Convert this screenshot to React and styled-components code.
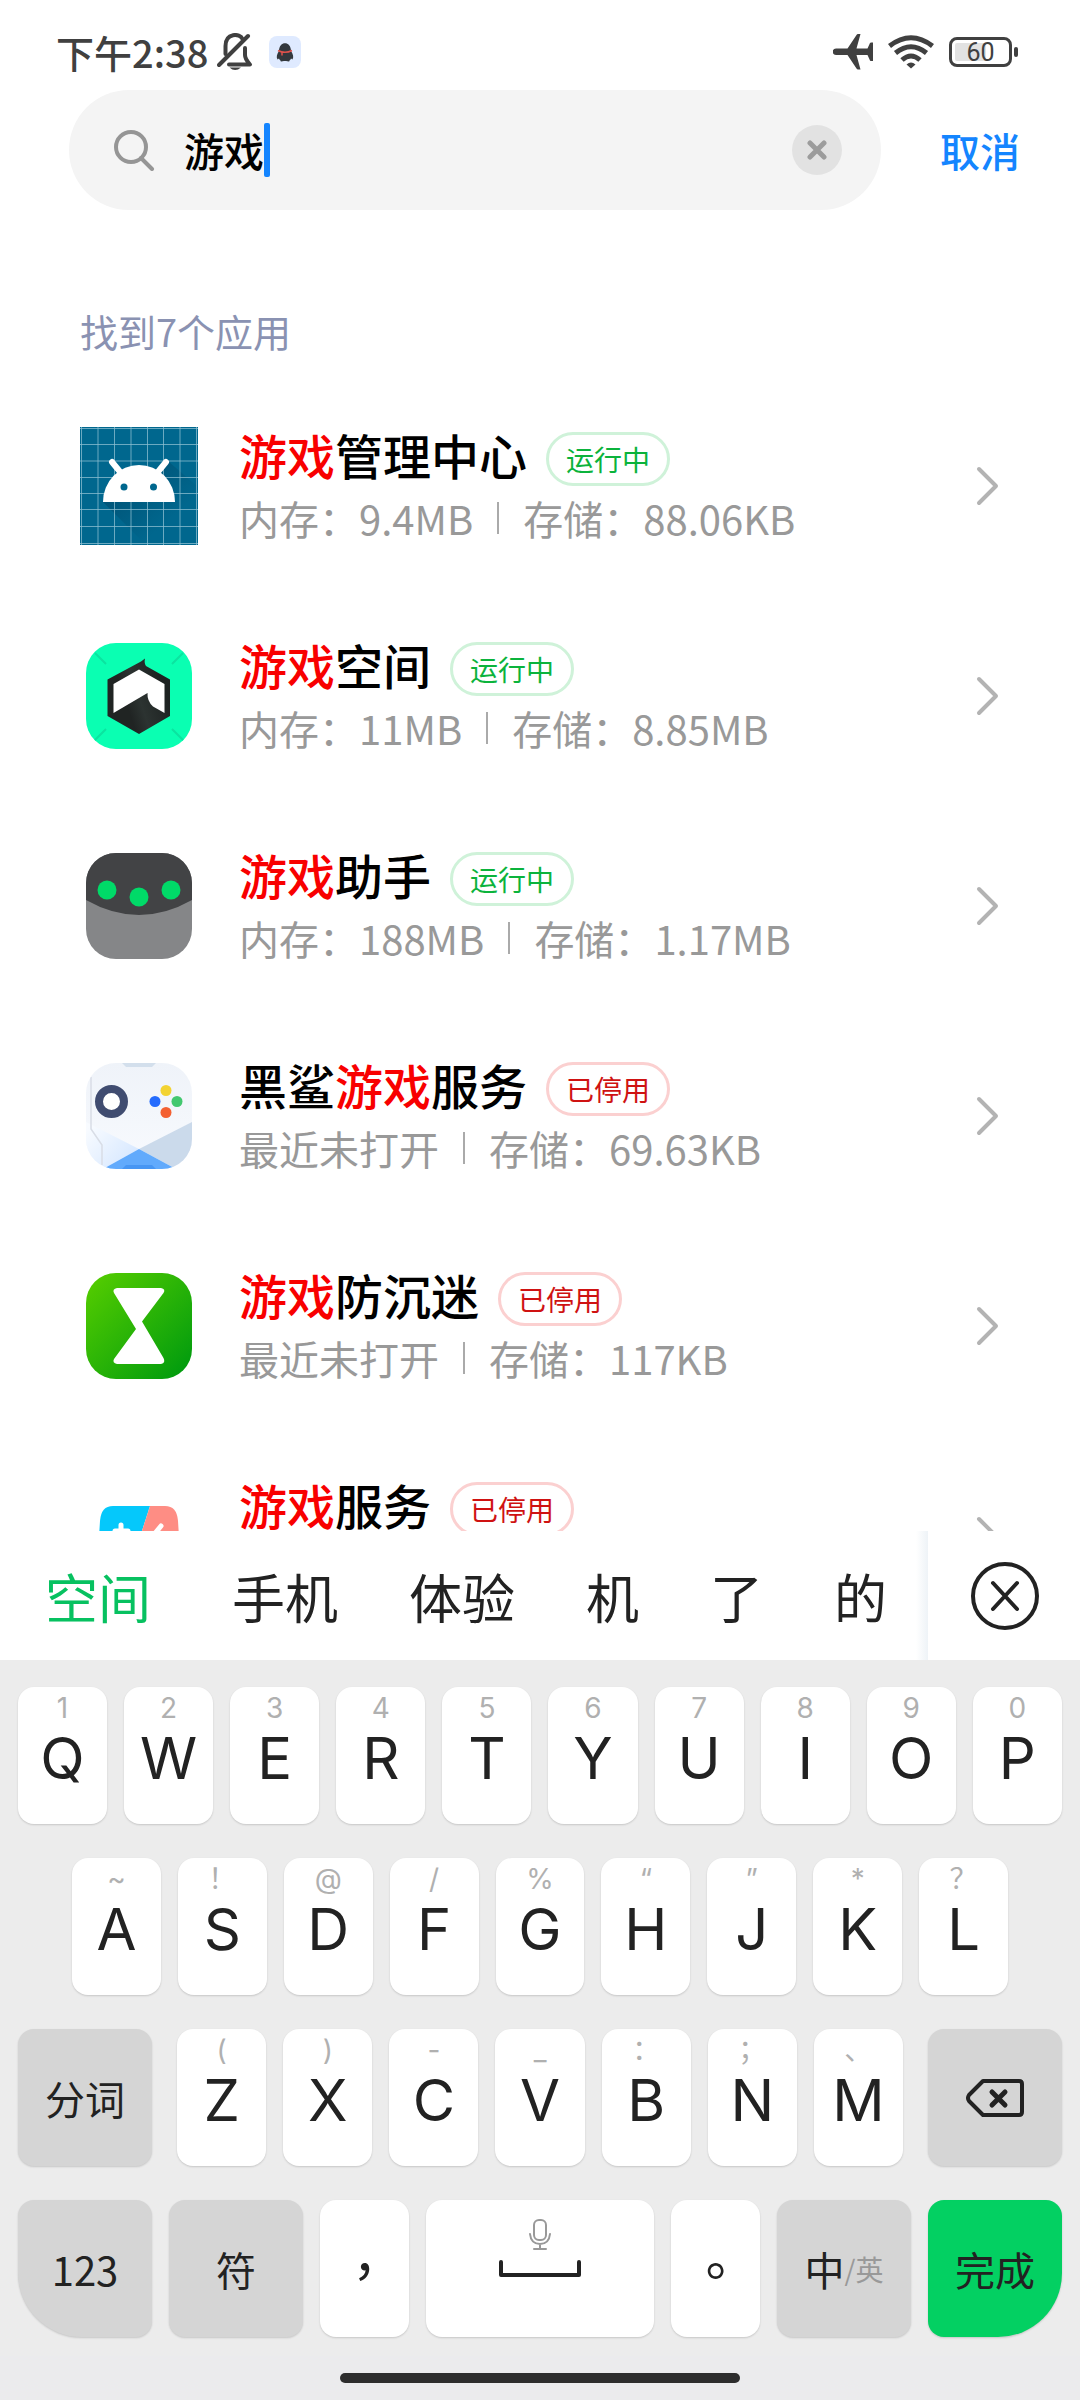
import { useState } from 'react'
import styled, { createGlobalStyle } from 'styled-components'

const KEYWORD = '游戏'

const apps = [
    { name: '游戏管理中心', running: true, memory: '9.4MB', storage: '88.06KB', Icon: AndroidIcon },
    { name: '游戏空间', running: true, memory: '11MB', storage: '8.85MB', Icon: SpaceIcon },
    { name: '游戏助手', running: true, memory: '188MB', storage: '1.17MB', Icon: AssistantIcon },
    { name: '黑鲨游戏服务', running: false, storage: '69.63KB', Icon: SharkIcon },
    { name: '游戏防沉迷', running: false, storage: '117KB', Icon: HourglassIcon },
    { name: '游戏服务', running: false, storage: '20.48KB', Icon: GamepadIcon },
]

const candidates = ['空间', '手机', '体验', '机', '了', '的']

const firstRow = [['Q', '1'], ['W', '2'], ['E', '3'], ['R', '4'], ['T', '5'], ['Y', '6'], ['U', '7'], ['I', '8'], ['O', '9'], ['P', '0']]
const secondRow = [['A', '~'], ['S', '！'], ['D', '@'], ['F', '/'], ['G', '%'], ['H', '“'], ['J', '”'], ['K', '*'], ['L', '？']]
const thirdRow = [['Z', '('], ['X', ')'], ['C', '-'], ['V', '_'], ['B', '：'], ['N', '；'], ['M', '、']]

export default function App() {
    const [query, setQuery] = useState(KEYWORD)

    return (
        <>
            <GlobalStyle />
            <Screen>
                <StatusBar />
                <SearchRow>
                    <SearchBox>
                        <SearchIcon />
                        <SearchInput aria-label="搜索应用" value={query} onChange={e => setQuery(e.target.value)} />
                        <Caret />
                        <ClearButton type="button" aria-label="清除" onClick={() => setQuery('')}>
                            <svg width="20" height="20" viewBox="0 0 20 20" fill="none" stroke="#9c9c9c" strokeWidth="5" strokeLinecap="round">
                                <path d="M3 3L17 17M17 3L3 17" />
                            </svg>
                        </ClearButton>
                    </SearchBox>
                    <CancelButton type="button">取消</CancelButton>
                </SearchRow>
                <Results>
                    <ResultCount>找到7个应用</ResultCount>
                    <AppList>
                        {apps.map(app => (
                            <li key={app.name}>
                                <AppRow app={app} />
                            </li>
                        ))}
                    </AppList>
                </Results>
                <CandidateBar>
                    <Candidates>
                        {candidates.map((word, i) => (
                            <Candidate type="button" key={word} $selected={i === 0}>{word}</Candidate>
                        ))}
                    </Candidates>
                    <CloseButton type="button" aria-label="关闭">
                        <svg width="70" height="70" viewBox="0 0 70 70" fill="none" stroke="#222" strokeWidth="4" strokeLinecap="round">
                            <circle cx="36" cy="35" r="32" />
                            <path d="M24 22L48 48M48 22L24 48" />
                        </svg>
                    </CloseButton>
                </CandidateBar>
                <Keyboard />
            </Screen>
        </>
    )
}

function StatusBar() {
    return (
        <Status>
            <Time>下午2:38</Time>
            <BellOffIcon />
            <QQIcon />
            <StatusRight>
                <svg width="40" height="36" viewBox="0 0 40 36" fill="#404040">
                    <path d="M3 14.5H14.5L23.5 1Q24 0 25 0H27.5L23.5 14.5H34.5L37 9Q37.500 8.500 38 8.500H40V27H38Q37.500 27 37 26.500L34.500 21H23.500L27.500 35.500H25Q24 35.500 23.500 34.500L14.500 21H3A3.250 3.250 0 0 1 3 14.500Z" />
                </svg>
                <svg width="46" height="34" viewBox="0 0 46 34" fill="none" stroke="#404040" strokeWidth="5">
                    <path d="M1.500 11Q23 -5.500 44.500 11M7.500 18Q23 5.500 38.500 18M14 25Q23 17 32 25" />
                    <path d="M18.500 29.500Q23 25.500 27.500 29.500L23 33.500Z" fill="#404040" stroke="none" />
                </svg>
                <Battery>
                    <BatteryBody>60</BatteryBody>
                    <BatteryTip />
                </Battery>
            </StatusRight>
        </Status>
    )
}

function AppRow({ app }) {
    const [before, after] = app.name.split(KEYWORD)

    return (
        <Row type="button">
            <IconBox>
                <app.Icon />
            </IconBox>
            <Info>
                <TitleLine>
                    <Name>{before}<Mark>{KEYWORD}</Mark>{after}</Name>
                    <Badge $running={app.running}>{app.running ? '运行中' : '已停用'}</Badge>
                </TitleLine>
                <Detail>
                    <span>{app.memory ? `内存：${app.memory}` : '最近未打开'}</span>
                    <Separator />
                    <span>存储：{app.storage}</span>
                </Detail>
            </Info>
            <svg width="24" height="40" viewBox="0 0 24 40" fill="none" stroke="#b3b3b3" strokeWidth="4" strokeLinecap="round" strokeLinejoin="round">
                <path d="M3 3L20 20L3 37" />
            </svg>
        </Row>
    )
}

function Keyboard() {
    return (
        <KeyboardPanel>
            <Keys>
                <KeyRow>
                    {firstRow.map(([letter, hint]) => <LetterKey key={letter} letter={letter} hint={hint} />)}
                </KeyRow>
                <KeyRow $inset>
                    {secondRow.map(([letter, hint]) => <LetterKey key={letter} letter={letter} hint={hint} />)}
                </KeyRow>
                <KeyRow $wide>
                    <FunctionKey type="button">分词</FunctionKey>
                    <LetterGroup>
                        {thirdRow.map(([letter, hint]) => <LetterKey key={letter} letter={letter} hint={hint} />)}
                    </LetterGroup>
                    <FunctionKey type="button" aria-label="删除">
                        <svg width="60" height="40" viewBox="0 0 60 40" fill="none" stroke="#222" strokeWidth="4" strokeLinecap="round" strokeLinejoin="round">
                            <path d="M18 3H54Q57 3 57 6V34Q57 37 54 37H18L4 23Q2 20 4 17Z" />
                            <path d="M27 14L40 27M40 14L27 27" strokeWidth="5" />
                        </svg>
                    </FunctionKey>
                </KeyRow>
                <KeyRow>
                    <FunctionKey type="button" $corner="left">123</FunctionKey>
                    <FunctionKey type="button">符</FunctionKey>
                    <PunctuationKey type="button">，</PunctuationKey>
                    <SpaceKey type="button" aria-label="空格">
                        <svg width="22" height="32" viewBox="0 0 22 32" fill="none" stroke="#999" strokeWidth="2" strokeLinecap="round">
                            <rect x="5" y="1" width="12" height="20" rx="5" />
                            <path d="M1 15Q2 25 11 25Q20 25 21 15M11 25V30M5 30H17" />
                        </svg>
                        <svg width="82" height="18" viewBox="0 0 82 18" fill="none" stroke="#222" strokeWidth="4" strokeLinecap="round" strokeLinejoin="round">
                            <path d="M2 2V15H80V2" />
                        </svg>
                    </SpaceKey>
                    <PunctuationKey type="button">。</PunctuationKey>
                    <FunctionKey type="button">中<Alternate>/英</Alternate></FunctionKey>
                    <FunctionKey type="button" $corner="right" $done>完成</FunctionKey>
                </KeyRow>
            </Keys>
            <HomeArea>
                <HomeBar />
            </HomeArea>
        </KeyboardPanel>
    )
}

function LetterKey({ letter, hint }) {
    return (
        <Letter type="button">
            <Hint>{hint}</Hint>
            {letter}
        </Letter>
    )
}

function SearchIcon() {
    return (
        <svg width="42" height="42" viewBox="0 0 42 42" fill="none" stroke="#959595" strokeWidth="4" strokeLinecap="round">
            <circle cx="17" cy="18" r="15" />
            <path d="M27 29L38 40" />
        </svg>
    )
}

function BellOffIcon() {
    return (
        <svg width="36" height="38" viewBox="0 0 36 38" fill="none" stroke="#404040" strokeWidth="4" strokeLinecap="round">
            <path d="M8.500 21V13C8.500 -0.500 23 0 25.500 6" />
            <path d="M28 15V22C28 26 30 28 33 31.500H12" strokeLinejoin="round" />
            <path d="M2 32L31 3" />
            <path d="M12.500 34.500H24Q18 39.500 12.500 34.500Z" fill="#404040" stroke="none" />
        </svg>
    )
}

function QQIcon() {
    return (
        <QQSvg width="32" height="32" viewBox="0 0 32 32">
            <rect width="32" height="32" rx="8" fill="#dfeaff" />
            <path d="M10 15C10 4.500 22 4.500 22 15C24 18 25 21 23.500 23.500L22 22.500Q21.500 24 20.500 24.500Q21 26 17 25H15Q11 26 11.500 24.500Q10.500 24 10 22.500L8.500 23.500C7 21 8 18 10 15Z" fill="#33383d" />
            <path d="M9 14.500Q16 18 23 14.500M13 16V19.500" stroke="#e0524c" strokeWidth="1.500" fill="none" />
        </QQSvg>
    )
}

function AndroidIcon() {
    return (
        <svg width="118" height="118" viewBox="0 0 118 118">
            <defs>
                <linearGradient id="headShadow" x1="0" y1="0" x2="1" y2="1">
                    <stop offset="0.2" stopColor="#004666" stopOpacity="0.6" />
                    <stop offset="0.7" stopColor="#004666" stopOpacity="0" />
                </linearGradient>
            </defs>
            <rect width="118" height="118" fill="#00678e" />
            <path d="M23 75L66 118H118V60L88 34Z" fill="url(#headShadow)" />
            <path
                d="M1.500 0V118M18 0V118M34.500 0V118M51 0V118M67.500 0V118M83.500 0V118M100 0V118M116.500 0V118M0 1.500H118M0 17.500H118M0 34H118M0 50.500H118M0 66.500H118M0 82.500H118M0 99.500H118M0 116.500H118"
                stroke="#8fc0d2"
                strokeOpacity="0.75"
            />
            <path d="M23 75A36 37 0 0 1 95 75Z" fill="#fff" />
            <path d="M32 35L41 46M86 35L77 46" stroke="#fff" strokeWidth="6" strokeLinecap="round" />
            <circle cx="44" cy="60" r="3.500" fill="#00678e" />
            <circle cx="73.500" cy="60" r="3.500" fill="#00678e" />
        </svg>
    )
}

function SpaceIcon() {
    return (
        <svg width="106" height="106" viewBox="0 0 106 106">
            <defs>
                <linearGradient id="hexagon" x1="0" y1="1" x2="1" y2="0.600">
                    <stop offset="0.4" stopColor="#202423" />
                    <stop offset="0.6" stopColor="#2c3331" />
                    <stop offset="1" stopColor="#1d2221" />
                </linearGradient>
            </defs>
            <rect width="106" height="106" rx="30" fill="#0affb2" />
            <path d="M9 10L20 21M97 10L86 21M9 97L20 86M97 97L86 86" stroke="#0be4a0" strokeWidth="2" />
            <path d="M21.500 36.500L55 18.500L59 15.500Q58 20 60 23L84 36.500V73L53 91L21.500 73Z" fill="url(#hexagon)" />
            <path d="M27.500 41L53 26.500L78.500 41V70L67 63.500Q61 58 61.500 50L27.500 70Z" fill="#fff" />
        </svg>
    )
}

function AssistantIcon() {
    return (
        <svg width="106" height="106" viewBox="0 0 106 106">
            <clipPath id="assistantShape"><rect width="106" height="106" rx="30" /></clipPath>
            <g clipPath="url(#assistantShape)">
                <rect width="106" height="106" fill="#858688" />
                <path d="M0 0H106V47Q53 77 0 47Z" fill="#424345" />
            </g>
            <circle cx="21" cy="37" r="9.500" fill="#00da68" />
            <circle cx="53" cy="44" r="9.500" fill="#00da68" />
            <circle cx="85" cy="37" r="9.500" fill="#00da68" />
        </svg>
    )
}

function SharkIcon() {
    return (
        <svg width="106" height="106" viewBox="0 0 106 106">
            <defs>
                <clipPath id="sharkShape"><rect width="106" height="106" rx="30" /></clipPath>
                <linearGradient id="sharkLeft" x1="0" y1="0.200" x2="0.800" y2="0.800">
                    <stop offset="0" stopColor="#f8fbff" />
                    <stop offset="1" stopColor="#d9e9ff" />
                </linearGradient>
                <linearGradient id="sharkBody" x1="0" y1="0" x2="0" y2="1">
                    <stop offset="0" stopColor="#eff3f9" />
                    <stop offset="1" stopColor="#f8fafe" />
                </linearGradient>
            </defs>
            <g clipPath="url(#sharkShape)">
                <rect width="106" height="106" fill="url(#sharkBody)" />
                <path d="M36 0H70L66 4H40Z" fill="#d3dfec" />
                <path d="M0 59L53 86L17 106H0Z" fill="url(#sharkLeft)" />
                <path d="M106 59L53 86L90 106H106Z" fill="#cbdaeb" />
                <path d="M53 86L17 106H90Z" fill="#61aafc" />
                <path d="M36 106L40 102H66L70 106Z" fill="#4796f3" />
                <path d="M5 14V66L16 82V102" fill="none" stroke="#d8dde6" strokeWidth="1.500" />
            </g>
            <circle cx="25.500" cy="38.500" r="12.500" fill="#fff" stroke="#404c70" strokeWidth="8" />
            <circle cx="80" cy="27.500" r="5.500" fill="#f3d332" />
            <circle cx="69" cy="38.500" r="5.500" fill="#246bfd" />
            <circle cx="91" cy="38.500" r="5.500" fill="#43c86f" />
            <circle cx="80" cy="49.500" r="5.500" fill="#f36032" />
        </svg>
    )
}

function HourglassIcon() {
    return (
        <svg width="106" height="106" viewBox="0 0 106 106">
            <defs>
                <linearGradient id="hourglass" x1="0" y1="0" x2="1" y2="1">
                    <stop offset="0.050" stopColor="#53cc00" />
                    <stop offset="0.950" stopColor="#009b0e" />
                </linearGradient>
            </defs>
            <rect width="106" height="106" rx="30" fill="url(#hourglass)" />
            <path d="M31 15H75Q80 16 77.500 20L56 48.500L77.500 85Q80 90 75 91H31Q26 90 28 86L50 56L28 20Q26 16 31 15Z" fill="#fff" />
        </svg>
    )
}

function GamepadIcon() {
    return (
        <svg width="118" height="118" viewBox="0 0 118 118">
            <path d="M33 29H70L51 88H27Q18 88 18 76L20 44Q21 29 33 29Z" fill="#05c8fb" />
            <path d="M70 29H85Q97 29 98 44L100 76Q100 88 91 88H51Z" fill="#fe8d84" />
            <path d="M41 48V62M35 54H48M81 49L72 60" stroke="#fff" strokeWidth="5" strokeLinecap="round" />
        </svg>
    )
}

const GlobalStyle = createGlobalStyle`
    * {
        box-sizing: border-box;
    }

    body {
        margin: 0;
        background: #fff;
        font-family: "Noto Sans CJK SC", sans-serif;
    }

    button, input {
        margin: 0;
        padding: 0;
        border: none;
        background: none;
        font: inherit;
        color: inherit;
    }

    svg {
        display: block;
        flex-shrink: 0;
    }
`

const Screen = styled.main`
    display: flex;
    flex-direction: column;
    height: 100vh;
    overflow: hidden;
`

const Status = styled.header`
    display: flex;
    align-items: center;
    height: 90px;
    padding: 14px 62px 0 56px;
    color: #404040;
    flex-shrink: 0;
`

const Time = styled.span`
    font-size: 38px;
    font-weight: 500;
    line-height: 48px;
    margin-right: 9px;
`

const QQSvg = styled.svg`
    margin-left: 16px;
`

const StatusRight = styled.div`
    display: flex;
    align-items: center;
    gap: 15px;
    margin-left: auto;
`

const Battery = styled.div`
    display: flex;
    align-items: center;
    gap: 2px;
`

const BatteryBody = styled.span`
    width: 63px;
    height: 30px;
    border: 3px solid #404040;
    border-radius: 8px;
    padding: 3px;
    background: linear-gradient(to right, #e2e2e2 60%, #fff 60%) content-box;
    font-family: Roboto, sans-serif;
    font-size: 25px;
    line-height: 20px;
    text-align: center;
`

const BatteryTip = styled.span`
    width: 4px;
    height: 10px;
    border-radius: 2px;
    background: #404040;
`

const SearchRow = styled.div`
    display: flex;
    align-items: center;
    padding: 0 60px 0 69px;
    gap: 59px;
    flex-shrink: 0;
`

const SearchBox = styled.div`
    flex: 1;
    display: flex;
    align-items: center;
    height: 120px;
    padding: 0 39px 0 45px;
    border-radius: 60px;
    background: #f4f4f4;
`

const SearchInput = styled.input`
    field-sizing: content;
    margin-left: 28px;
    font-size: 40px;
    font-weight: 500;
    line-height: 54px;
    color: #000;
    outline: none;
    caret-color: transparent;
`

const Caret = styled.span`
    width: 6px;
    height: 54px;
    border-radius: 2px;
    background: #1485ff;
`

const ClearButton = styled.button`
    display: grid;
    place-items: center;
    width: 50px;
    height: 50px;
    margin-left: auto;
    border-radius: 50%;
    background: #e2e2e2;
`

const CancelButton = styled.button`
    font-size: 40px;
    font-weight: 500;
    line-height: 54px;
    color: #1485ff;
`

const Results = styled.section`
    flex: 1;
    min-height: 0;
    overflow: hidden;
`

const ResultCount = styled.h2`
    margin: 0;
    padding: 94px 80px 23px;
    font-size: 38px;
    font-weight: 400;
    line-height: 54px;
    color: #8a92b2;
`

const AppList = styled.ul`
    margin: 0;
    padding: 0;
    list-style: none;
`

const Row = styled.button`
    display: flex;
    align-items: center;
    width: 100%;
    height: 210px;
    padding: 0 80px;
    text-align: left;
`

const IconBox = styled.span`
    display: grid;
    place-items: center;
    width: 118px;
    height: 118px;
    margin-right: 41px;
`

const Info = styled.span`
    flex: 1;
`

const TitleLine = styled.span`
    display: flex;
    align-items: flex-end;
    gap: 19px;
    height: 64px;
`

const Name = styled.span`
    font-size: 48px;
    font-weight: 500;
    line-height: 64px;
    color: #000;
`

const Mark = styled.span`
    color: #f80000;
`

const Badge = styled.span`
    padding: 0 17px;
    border: 3px solid ${({ $running }) => ($running ? '#cff2d9' : '#fbd0d0')};
    border-radius: 27px;
    font-size: 28px;
    line-height: 48px;
    color: ${({ $running }) => ($running ? '#0bb33c' : '#cf1212')};
`

const Detail = styled.span`
    display: flex;
    align-items: center;
    gap: 24px;
    font-size: 40px;
    line-height: 64px;
    color: #999;
`

const Separator = styled.span`
    width: 2px;
    height: 32px;
    background: #aaa;
`

const CandidateBar = styled.div`
    display: flex;
    height: 129px;
    background: #fff;
    flex-shrink: 0;
`

const Candidates = styled.div`
    flex: 1;
    display: flex;
    align-items: center;
    gap: 71px;
    padding-left: 35px;
    background: linear-gradient(to left, #eef3f7, #fff 12px);
`

const Candidate = styled.button`
    padding: ${({ $selected }) => ($selected ? '0 10px' : '0')};
    font-size: 53px;
    line-height: 64px;
    color: ${({ $selected }) => ($selected ? '#07c160' : '#222')};
`

const CloseButton = styled.button`
    display: grid;
    place-items: center;
    width: 152px;
`

const KeyboardPanel = styled.section`
    flex-shrink: 0;
    background: #ececec;
`

const Keys = styled.div`
    display: flex;
    flex-direction: column;
    gap: 34px;
    padding: 27px 18px 19px;
`

const KeyRow = styled.div`
    display: flex;
    gap: ${({ $wide }) => ($wide ? '25px' : '17px')};
    padding: 0 ${({ $inset }) => ($inset ? '54px' : '0')};
`

const LetterGroup = styled.div`
    flex: 725 1 0;
    display: flex;
    gap: 17px;
`

const Key = styled.button`
    display: flex;
    align-items: center;
    justify-content: center;
    height: 137px;
    border-radius: 16px;
    background: #fff;
    box-shadow: 0 1px 2px rgba(0, 0, 0, 0.16);
    color: #222;
    min-width: 0;
`

const Letter = styled(Key)`
    flex: 89 1 0;
    flex-direction: column;
    justify-content: flex-start;
    padding-top: 3px;
    font-family: Inter, "Noto Sans CJK SC", sans-serif;
    font-size: 58px;
    line-height: 64px;
`

const Hint = styled.span`
    font-size: 28px;
    line-height: 36px;
    color: #b0b0b0;
`

const FunctionKey = styled(Key)`
    flex: 134 1 0;
    background: ${({ $done }) => ($done ? '#03d062' : '#d5d5d5')};
    border-bottom-left-radius: ${({ $corner }) => ($corner === 'left' ? '64px' : '16px')};
    border-bottom-right-radius: ${({ $corner }) => ($corner === 'right' ? '64px' : '16px')};
    font-size: 40px;
`

const PunctuationKey = styled(Key)`
    flex: 89 1 0;
    font-family: "Noto Sans CJK TC", sans-serif;
    font-size: 52px;
`

const SpaceKey = styled(Key)`
    flex: 228 1 0;
    flex-direction: column;
    justify-content: flex-start;
    gap: 9px;
    padding-top: 19px;
`

const Alternate = styled.span`
    font-size: 28px;
    color: #999;
`

const HomeArea = styled.div`
    display: flex;
    justify-content: center;
    height: 44px;
    padding-top: 17px;
    background: #ebebed;
`

const HomeBar = styled.span`
    width: 37%;
    height: 10px;
    border-radius: 5px;
    background: #2d2d2d;
`
